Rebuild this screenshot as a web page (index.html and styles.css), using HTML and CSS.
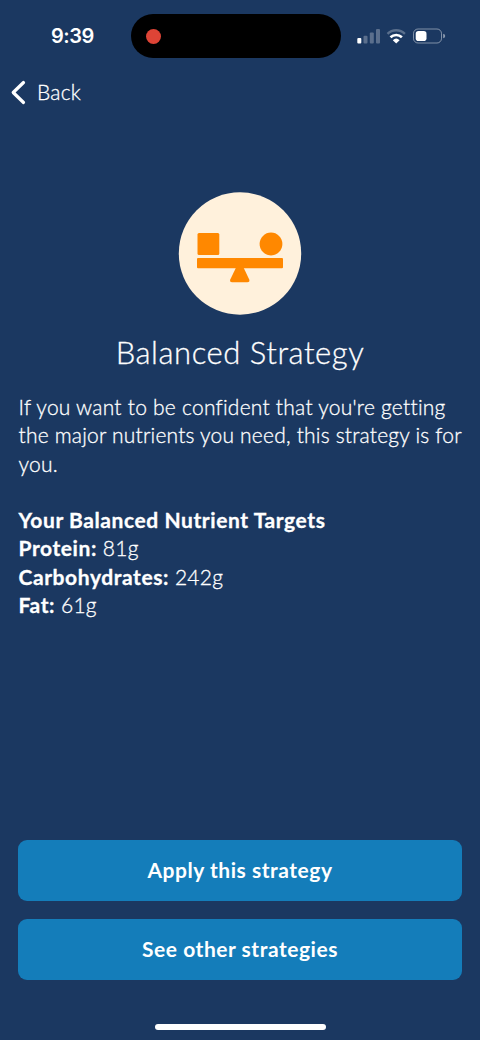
FILE: index.html
```html
<!DOCTYPE html>
<html lang="en">
<head>
<meta charset="utf-8">
<meta name="viewport" content="width=device-width, initial-scale=1">
<title>Balanced Strategy</title>
<link rel="stylesheet" href="styles.css">
</head>
<body>
<div class="screen">
  <header class="status">
    <div class="time">9:39</div>
    <div class="island"><span class="rec"></span></div>
    <svg class="indicators" viewBox="0 0 90 18" width="90" height="18">
      <g fill="#fff">
        <rect x="0.3" y="11" width="4" height="5.5" rx="1"/>
        <g opacity=".28">
          <rect x="6.5" y="8.8" width="4" height="7.7" rx="1"/>
          <rect x="12.8" y="5.5" width="4" height="11" rx="1"/>
          <rect x="19" y="2" width="4" height="14.5" rx="1"/>
        </g>
        <path d="M35.8 13.2a5 5 0 0 1 6.8 0L39.2 16.6z"/>
      </g>
      <path d="M33.5 10.3a8.2 8.2 0 0 1 11.4 0" fill="none" stroke="#fff" stroke-width="2.6"/>
      <path d="M30.5 6.8a12.5 12.5 0 0 1 17.4 0" fill="none" stroke="#fff" stroke-opacity=".28" stroke-width="2.4"/>
      <rect x="56.5" y="2" width="28" height="14" rx="4.5" fill="none" stroke="#fff" stroke-opacity=".45"/>
      <rect x="58.7" y="4" width="10.8" height="10" rx="2.8" fill="#fff"/>
      <path d="M86.2 6.8q2 .5 2 2.2t-2 2.2z" fill="#fff" fill-opacity=".5"/>
    </svg>
  </header>
  <nav class="nav">
    <svg width="16" height="26" viewBox="0 0 16 26"><path d="M13.5 2.500 3.200 12.500l10.300 10" fill="none" stroke="#fff" stroke-width="3.200" stroke-linecap="round" stroke-linejoin="round"/></svg>
    <span class="back">Back</span>
  </nav>
  <main class="content">
    <svg class="badge" width="124" height="123" viewBox="0 0 124 123">
      <circle cx="62" cy="61.500" r="61.200" fill="#fff1dc"/>
      <g fill="#ff8800">
        <rect x="19.500" y="41" width="21.800" height="22" rx="1.500"/>
        <circle cx="93" cy="52" r="11.400"/>
        <rect x="19" y="66" width="86" height="10.200" rx="1"/>
        <path d="M58.300 75h7l5.800 12.300q1.200 3-1.800 3H54.200q-3 0-1.800-3z"/>
      </g>
    </svg>
    <h1 class="title">Balanced Strategy</h1>
    <p class="copy">If you want to be confident that you're getting<br><span class="tight">the major nutrients you need, this strategy is for</span><br>you.</p>
    <p class="copy targets"><b>Your Balanced Nutrient Targets</b><br><b>Protein:</b> 81g<br><b>Carbohydrates:</b> 242g<br><b>Fat:</b> 61g</p>
  </main>
  <footer class="actions">
    <button class="button">Apply this strategy</button>
    <button class="button">See other strategies</button>
    <div class="home"></div>
  </footer>
</div>
</body>
</html>
```
FILE: styles.css
```css
* { box-sizing: border-box; }
body { margin: 0; background: #1b3861; }
.screen {
  width: 480px;
  height: 1040px;
  display: flex;
  flex-direction: column;
  background: #1b3861;
  color: #fff;
  font-family: Lato, "Open Sans", sans-serif;
  font-variant-ligatures: none;
}
.status {
  height: 72px;
  display: grid;
  grid-template-columns: 131px 210px 1fr;
  align-items: center;
}
.time {
  padding-left: 51px;
  font: 600 20px/24px Inter, "Liberation Sans", sans-serif;
  letter-spacing: -0.5px;
}
.island {
  height: 44px;
  border-radius: 22px;
  background: #000;
  display: flex;
  align-items: center;
  padding-left: 15px;
}
.rec { width: 15px; height: 15px; border-radius: 50%; background: #de4436; }
.indicators { margin-left: 16px; }
.nav {
  height: 42px;
  padding-left: 10px;
  display: flex;
  align-items: center;
  gap: 11px;
}
.back {
  padding-bottom: 3px;
  font-size: 21px;
  font-weight: 300;
  letter-spacing: 0.2px;
  -webkit-text-stroke: 0.3px #fff;
}
.content {
  flex: 1;
  display: flex;
  flex-direction: column;
  padding: 78px 18px 0;
}
.badge { align-self: center; }
.title {
  margin: 17px 0 0;
  font-size: 31px;
  line-height: 40px;
  font-weight: 300;
  letter-spacing: 0.55px;
  text-align: center;
  white-space: nowrap;
  -webkit-text-stroke: 0.3px #fff;
}
.copy {
  margin: 21px 0 0;
  padding-left: 0.5px;
  font-size: 21px;
  line-height: 28.3px;
  font-weight: 300;
  letter-spacing: 0.24px;
  white-space: nowrap;
  -webkit-text-stroke: 0.3px #fff;
}
.tight { letter-spacing: 0.2px; }
.targets { margin-top: 28.3px; }
.copy b { font-weight: 700; letter-spacing: 0.58px; }
.actions {
  display: flex;
  flex-direction: column;
  gap: 18px;
  padding: 0 18px;
  height: 200px;
}
.button {
  height: 61px;
  padding: 0 0 2px;
  border: 0;
  border-radius: 9px;
  background: #147dba;
  color: #fff;
  font: 700 21px/28px Lato, "Open Sans", sans-serif;
  letter-spacing: 0.53px;
}
.home {
  align-self: center;
  width: 171px;
  height: 6px;
  margin-top: 26px;
  border-radius: 3px;
  background: #fff;
}
```
